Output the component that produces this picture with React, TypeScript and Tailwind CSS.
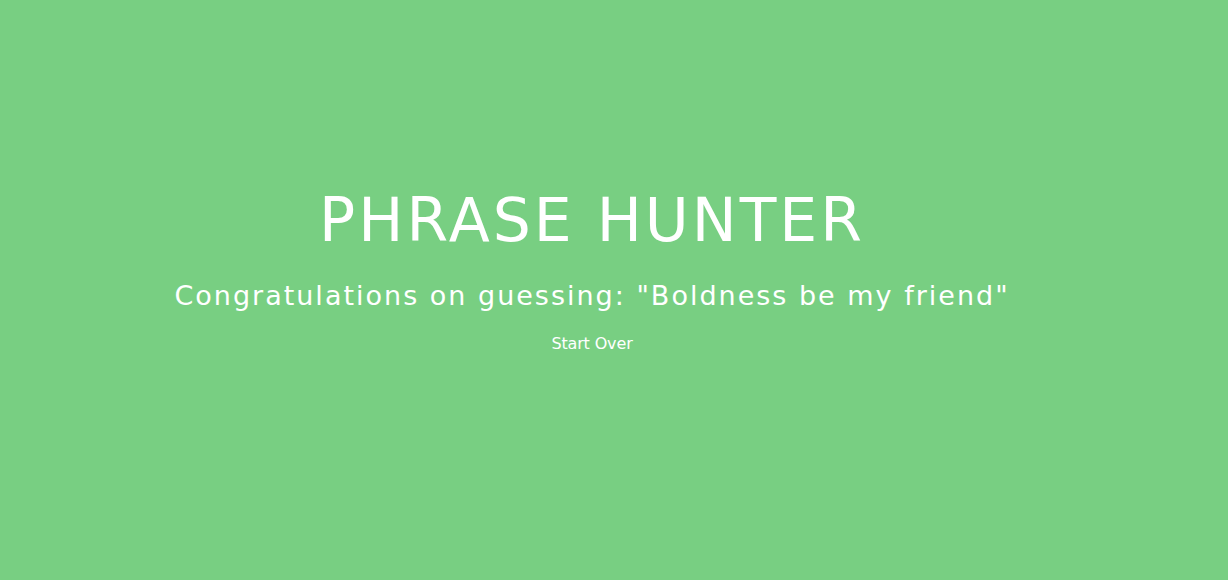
import React from 'react';

export default function App() {
  const phrase = 'Boldness be my friend';

  return (
    <div className="min-h-screen w-full bg-[#78cf82] text-white font-['DejaVu_Sans',sans-serif]">
      <div className="flex flex-col items-center pt-[190px] pr-[44px]">
        <h2 className="text-[60px] leading-[60px] tracking-[3px] uppercase font-normal">
          Phrase Hunter
        </h2>
        <h1 className="mt-[32px] text-[27px] leading-[27px] tracking-[2px] font-normal">
          Congratulations on guessing: "{phrase}"
        </h1>
        <button className="mt-[27px] text-[16px] leading-[16px] tracking-[-0.15px] bg-transparent text-white">
          Start Over
        </button>
      </div>
    </div>
  );
}
